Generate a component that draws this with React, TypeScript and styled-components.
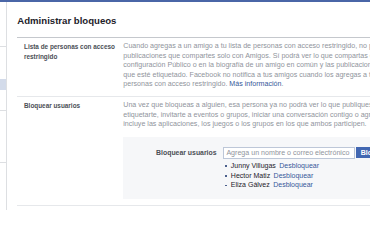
import React from "react";
import styled, { createGlobalStyle } from "styled-components";

const GlobalStyle = createGlobalStyle`
  html, body {
    margin: 0;
    padding: 0;
    background: #ffffff;
    overflow: hidden;
    width: 370px;
    height: 210px;
  }
  body {
    font-family: "Liberation Sans", Arial, sans-serif;
  }
`;

const TopBar = styled.div`
  height: 1.5px;
  background: #4a66a7;
`;

const Layout = styled.div`
  display: flex;
  height: 208.5px;
`;

const Sidebar = styled.nav`
  width: 6px;
  flex-shrink: 0;
  border-right: 1px solid #dddfe2;
  display: flex;
  flex-direction: column;
`;

const SideItem = styled.div<{ $h: number; $active?: boolean; $divider?: boolean }>`
  height: ${(p) => p.$h}px;
  flex-shrink: 0;
  background: ${(p) => (p.$active ? "#d3dbea" : "transparent")};
  border-bottom: ${(p) => (p.$divider ? "1px solid #dddfe2" : "none")};
`;

const Main = styled.main`
  flex: 1;
  min-width: 0;
  padding: 13px 0 0 10.3px;
`;

const Title = styled.h2`
  margin: 0;
  font-size: 9.6px;
  font-weight: bold;
  line-height: 12px;
  color: #1d2129;
  padding-bottom: 10.8px;
  border-bottom: 1px solid #c5c8cd;
  white-space: nowrap;
`;

const Row = styled.section<{ $pb: number }>`
  display: grid;
  grid-template-columns: 93px 1fr;
  column-gap: 6.3px;
  padding: 4px 0 ${(p) => p.$pb}px 6.7px;
  border-bottom: 1px solid #e6e8eb;
`;

const Label = styled.div`
  font-size: 6.4px;
  font-weight: bold;
  line-height: 9.4px;
  color: #4b4f56;
`;

const Desc = styled.div`
  font-size: 7.1px;
  line-height: 9.4px;
  color: #90949c;
  min-width: 0;
`;

const DescLine = styled.span`
  display: block;
  white-space: nowrap;
`;

const Link = styled.a`
  color: #365899;
  text-decoration: none;
`;

const Box = styled.div`
  margin-top: 7px;
  background: #f6f7f9;
  padding: 10.3px 0 9px;
  display: grid;
  grid-template-columns: 93.3px auto;
  column-gap: 6.3px;
  align-items: start;
`;

const BoxLabel = styled.div`
  font-size: 6.9px;
  font-weight: bold;
  line-height: 12px;
  color: #4b4f56;
  text-align: right;
  white-space: nowrap;
`;

const InputRow = styled.div`
  display: flex;
  align-items: flex-start;
  gap: 1.4px;
  white-space: nowrap;
`;

const TextInput = styled.input`
  width: 132px;
  height: 12px;
  box-sizing: border-box;
  border: 1px solid #bdc7d8;
  background: #ffffff;
  margin: 0;
  padding: 0 2.5px;
  font-family: "Liberation Sans", Arial, sans-serif;
  font-size: 7.1px;
  color: #1d2129;
  outline: none;
  &::placeholder {
    color: #90949c;
  }
`;

const BlockButton = styled.button`
  height: 11px;
  margin: 0;
  padding: 0 3.5px;
  box-sizing: border-box;
  border: 1px solid #4267b2;
  background: #4267b2;
  color: #ffffff;
  font-family: "Liberation Sans", Arial, sans-serif;
  font-size: 7px;
  font-weight: bold;
  line-height: 9px;
  flex-shrink: 0;
`;

const BlockedList = styled.ul`
  grid-column: 2;
  margin: 2px 0 0;
  padding: 0;
  list-style: none;
`;

const BlockedItem = styled.li`
  font-size: 7px;
  line-height: 9.7px;
  color: #1d2129;
  padding-left: 2.2px;
  white-space: nowrap;
  &::before {
    content: "";
    display: inline-block;
    width: 1.6px;
    height: 1.6px;
    background: #4b5f8c;
    margin-right: 4.2px;
    vertical-align: middle;
  }
`;

const UnblockLink = styled(Link)`
  margin-left: 1.5px;
`;

const blocked = ["Junny Villugas", "Hector Matiz", "Eliza Gálvez"];

export default function App() {
  return (
    <>
      <GlobalStyle />
      <TopBar />
      <Layout>
        <Sidebar>
          <SideItem $h={44.5} $divider />
          <SideItem $h={32} />
          <SideItem $h={11} $active />
          <SideItem $h={20} $divider />
          <SideItem $h={51} $divider />
        </Sidebar>
        <Main>
          <Title>Administrar bloqueos</Title>
          <Row $pb={7}>
            <Label>Lista de personas con acceso restringido</Label>
            <Desc>
              <DescLine>
                Cuando agregas a un amigo a tu lista de personas con acceso restringido, no podrá ver las
              </DescLine>
              <DescLine>
                publicaciones que compartes solo con Amigos. Sí podrá ver lo que compartas con la
              </DescLine>
              <DescLine>
                configuración Público o en la biografía de un amigo en común y las publicaciones en las
              </DescLine>
              <DescLine>
                que esté etiquetado. Facebook no notifica a tus amigos cuando los agregas a tu lista de
              </DescLine>
              <DescLine>
                personas con acceso restringido. <Link href="#">Más información</Link>.
              </DescLine>
            </Desc>
          </Row>
          <Row $pb={6}>
            <Label>Bloquear usuarios</Label>
            <Desc>
              <DescLine>
                Una vez que bloqueas a alguien, esa persona ya no podrá ver lo que publiques en tu biografía,
              </DescLine>
              <DescLine>
                etiquetarte, invitarte a eventos o grupos, iniciar una conversación contigo o agregarte como amigo.
              </DescLine>
              <DescLine>
                incluye las aplicaciones, los juegos o los grupos en los que ambos participen.
              </DescLine>
              <Box>
                <BoxLabel>Bloquear usuarios</BoxLabel>
                <InputRow>
                  <TextInput placeholder="Agrega un nombre o correo electrónico" />
                  <BlockButton>Bloquear</BlockButton>
                </InputRow>
                <BlockedList>
                  {blocked.map((name) => (
                    <BlockedItem key={name}>
                      {name} <UnblockLink href="#">Desbloquear</UnblockLink>
                    </BlockedItem>
                  ))}
                </BlockedList>
              </Box>
            </Desc>
          </Row>
        </Main>
      </Layout>
    </>
  );
}
